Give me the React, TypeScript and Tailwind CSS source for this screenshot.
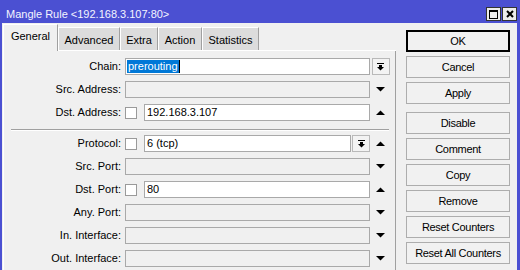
import React from 'react';

type Trail = 'up' | 'down' | 'menu';

interface FieldRow {
  label: string;
  check?: boolean;
  value?: string;
  selected?: boolean;
  menu?: boolean;
  trail: Trail;
}

const topRows: FieldRow[] = [
  { label: 'Chain:', value: 'prerouting', selected: true, trail: 'menu' },
  { label: 'Src. Address:', trail: 'down' },
  { label: 'Dst. Address:', check: true, value: '192.168.3.107', trail: 'up' },
];

const bottomRows: FieldRow[] = [
  { label: 'Protocol:', check: true, value: '6 (tcp)', menu: true, trail: 'up' },
  { label: 'Src. Port:', trail: 'down' },
  { label: 'Dst. Port:', check: true, value: '80', trail: 'up' },
  { label: 'Any. Port:', trail: 'down' },
  { label: 'In. Interface:', trail: 'down' },
  { label: 'Out. Interface:', trail: 'down' },
];

const tabs = [
  { name: 'General', w: 'w-[55px]' },
  { name: 'Advanced', w: 'w-[62px]' },
  { name: 'Extra', w: 'w-[38px]' },
  { name: 'Action', w: 'w-[44px]' },
  { name: 'Statistics', w: 'w-[57px]' },
];

const Tri = ({ up }: { up?: boolean }) => (
  <svg width="9" height="5" viewBox="0 0 9 5" className="block">
    <polygon points={up ? '0,5 9,5 4.5,0.5' : '0,0 9,0 4.5,4.5'} fill="#000" />
  </svg>
);

const DropIcon = () => (
  <svg width="7" height="8" viewBox="0 0 7 8" className="block">
    <rect x="0" y="0" width="7" height="1" fill="#000" />
    <rect x="2" y="2" width="3" height="2" fill="#000" />
    <polygon points="0,4 7,4 3.5,7.5" fill="#000" />
  </svg>
);

const MenuButton = () => (
  <div className="flex h-[17px] w-[18px] items-center justify-center border border-[#b9b9b9] bg-[#f3f3f3]">
    <DropIcon />
  </div>
);

const Row = ({ row }: { row: FieldRow }) => {
  const active = row.value !== undefined;
  return (
    <div className="flex h-[17px] items-center">
      <div className="w-[117px] text-right leading-[13px]">{row.label}</div>
      <div className="ml-[4px] flex w-[245px] items-center">
        {row.check && <div className="mr-[7px] h-[12px] w-[12px] shrink-0 border border-[#9a9a9a] bg-white" />}
        <div
          className={`flex h-[17px] flex-1 items-center border border-[#a9a9a9] ${
            active ? 'bg-white' : 'bg-[#f0f0f0]'
          } ${row.selected ? 'pl-[1px]' : 'pl-[2px]'}`}
        >
          {row.selected ? (
            <>
              <span className="bg-[#0078d7] px-px leading-[13px] text-white">{row.value}</span>
              <span className="h-[13px] w-px bg-black" />
            </>
          ) : (
            <span className="leading-[13px]">{row.value}</span>
          )}
        </div>
        {row.menu && (
          <div className="ml-px">
            <MenuButton />
          </div>
        )}
      </div>
      <div className="ml-px flex w-[19px] items-center justify-center">
        {row.trail === 'menu' ? <MenuButton /> : <Tri up={row.trail === 'up'} />}
      </div>
    </div>
  );
};

const SideButton = ({ label, primary, className = '' }: { label: string; primary?: boolean; className?: string }) => (
  <div
    className={`flex h-[22px] w-[104px] items-center justify-center bg-[#f1f1f1] tracking-[-0.3px] ${
      primary ? 'border-2 border-black' : 'border border-[#adadad]'
    } ${className}`}
  >
    {label}
  </div>
);

export default function App() {
  return (
    <div className="h-[270px] w-[520px] overflow-hidden bg-[#4b50d2] pl-[2px] pr-[3px] font-['Liberation_Sans',Arial,sans-serif] text-[11px] text-black">
      {/* Title bar */}
      <div className="flex h-[23px] items-start justify-between">
        <div className="pl-[4px] pt-[8px] leading-[13px] text-[#f4f4ff]">Mangle Rule &lt;192.168.3.107:80&gt;</div>
        <div className="flex gap-[1px] pt-[7px]">
          <div className="flex h-[14px] w-[15px] items-center justify-center border border-[#333] bg-[#ececec]">
            <div className="h-[9px] w-[9px] border border-t-2 border-black" />
          </div>
          <div className="flex h-[14px] w-[15px] items-center justify-center border border-[#333] bg-[#ececec]">
            <svg width="8" height="8" viewBox="0 0 8 8" className="block">
              <path d="M1 1 L7 7 M7 1 L1 7" stroke="#000" strokeWidth="2" />
            </svg>
          </div>
        </div>
      </div>

      {/* Body */}
      <div className="flex h-[247px] bg-[#f0f0f0]">
        <div className="ml-px w-[393px]">
          {/* Tabs */}
          <div className="mt-px flex h-[27px] items-end border-b border-white">
            {tabs.map((t, i) =>
              i === 0 ? (
                <div
                  key={t.name}
                  className={`relative z-10 -mb-px h-[27px] ${t.w} border-l border-t border-r border-white border-r-[#a0a0a0] bg-[#f0f0f0] pt-[5px] text-center leading-[13px]`}
                >
                  {t.name}
                </div>
              ) : (
                <div
                  key={t.name}
                  className={`h-[23px] ${t.w} border-l border-t border-r border-white border-r-[#a0a0a0] bg-[#dcdcdc] pt-[6px] text-center leading-[13px]`}
                >
                  {t.name}
                </div>
              )
            )}
          </div>

          {/* Panel */}
          <div className="h-[220px] border-l border-r border-white border-r-[#a0a0a0] pt-[7px]">
            <div className="flex flex-col gap-[6px]">
              {topRows.map((r) => (
                <Row key={r.label} row={r} />
              ))}
            </div>
            <div className="ml-[7px] mt-[8px] mb-[4px] w-[378px] border-t border-b border-t-[#a0a0a0] border-b-white" />
            <div className="flex flex-col gap-[6px]">
              {bottomRows.map((r) => (
                <Row key={r.label} row={r} />
              ))}
            </div>
          </div>
        </div>

        {/* Side buttons */}
        <div className="ml-[10px] flex flex-col pt-[7px]">
          <SideButton label="OK" primary />
          <SideButton label="Cancel" className="mt-[4px]" />
          <SideButton label="Apply" className="mt-[4px]" />
          <SideButton label="Disable" className="mt-[8px]" />
          <SideButton label="Comment" className="mt-[4px]" />
          <SideButton label="Copy" className="mt-[4px]" />
          <SideButton label="Remove" className="mt-[4px]" />
          <SideButton label="Reset Counters" className="mt-[4px]" />
          <SideButton label="Reset All Counters" className="mt-[4px]" />
        </div>
      </div>
    </div>
  );
}
